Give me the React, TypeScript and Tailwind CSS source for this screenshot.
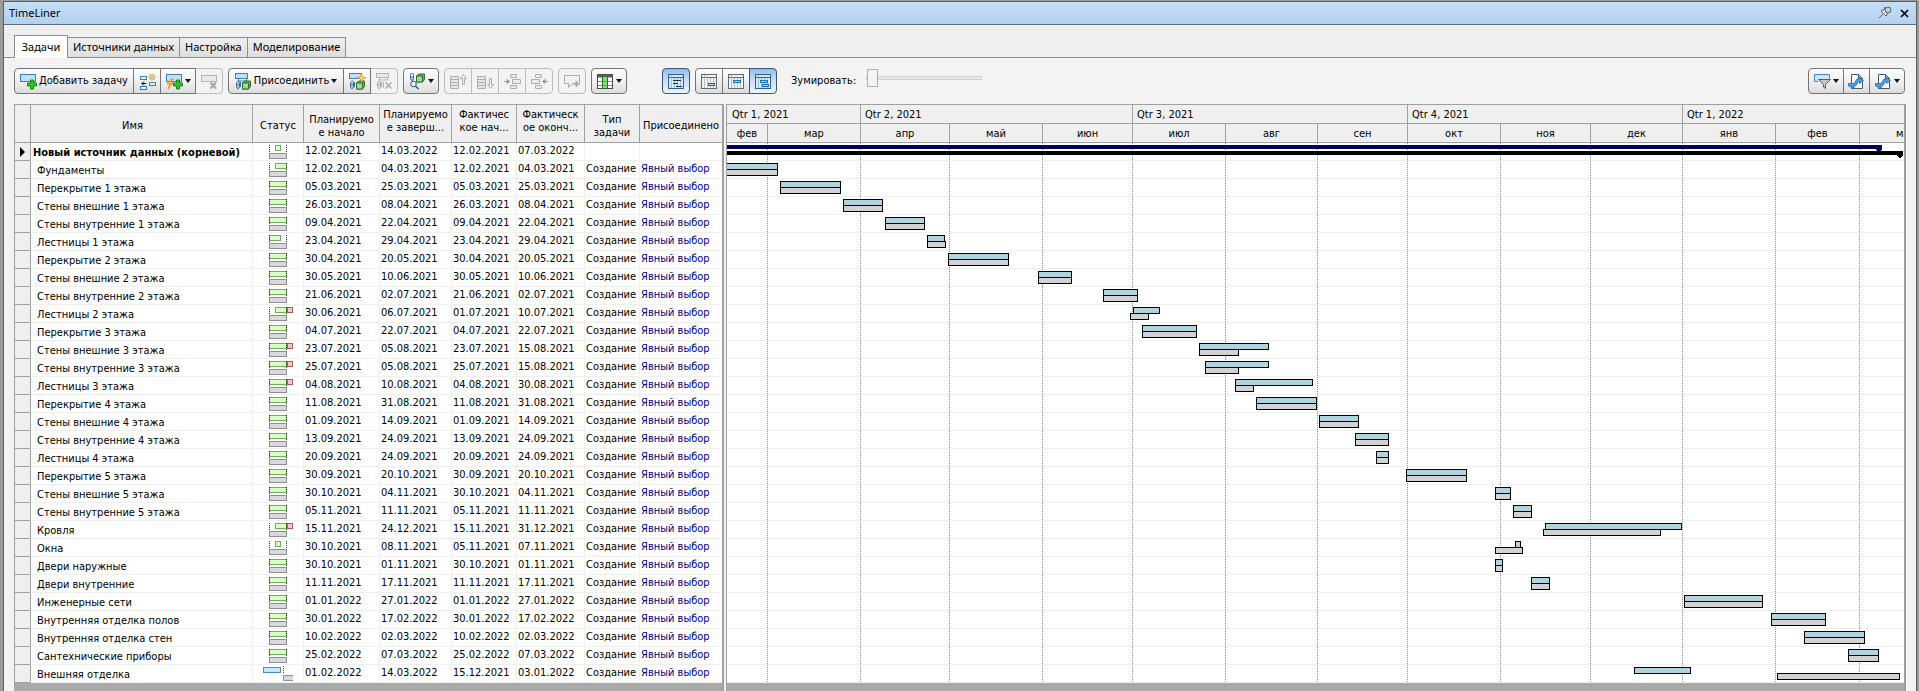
import type { ReactNode } from "react";

type Status = "full" | "late" | "small" | "early" | "lateOver" | "fullOver" | "ahead";

interface Task {
  name: string;
  status: Status;
  planStart: string;
  planEnd: string;
  factStart: string;
  factEnd: string;
  factStartHour?: number;
  factEndHour?: number;
}

const task = (
  name: string,
  status: Status,
  planStart: string,
  planEnd: string,
  factStart: string = planStart,
  factEnd: string = planEnd,
  factStartHour?: number,
  factEndHour?: number,
): Task => ({ name, status, planStart, planEnd, factStart, factEnd, factStartHour, factEndHour });

const TASKS: Task[] = [
  task("Новый источник данных (корневой)", "small", "12.02.2021", "14.03.2022", "12.02.2021", "07.03.2022"),
  task("Фундаменты", "late", "12.02.2021", "04.03.2021"),
  task("Перекрытие 1 этажа", "full", "05.03.2021", "25.03.2021"),
  task("Стены внешние 1 этажа", "full", "26.03.2021", "08.04.2021"),
  task("Стены внутренние 1 этажа", "full", "09.04.2021", "22.04.2021"),
  task("Лестницы 1 этажа", "early", "23.04.2021", "29.04.2021", "23.04.2021", "29.04.2021", 8, 9),
  task("Перекрытие 2 этажа", "full", "30.04.2021", "20.05.2021"),
  task("Стены внешние 2 этажа", "full", "30.05.2021", "10.06.2021"),
  task("Стены внутренние 2 этажа", "full", "21.06.2021", "02.07.2021"),
  task("Лестницы 2 этажа", "lateOver", "30.06.2021", "06.07.2021", "01.07.2021", "10.07.2021", 8, 8),
  task("Перекрытие 3 этажа", "full", "04.07.2021", "22.07.2021"),
  task("Стены внешние 3 этажа", "fullOver", "23.07.2021", "05.08.2021", "23.07.2021", "15.08.2021"),
  task("Стены внутренние 3 этажа", "fullOver", "25.07.2021", "05.08.2021", "25.07.2021", "15.08.2021"),
  task("Лестницы 3 этажа", "fullOver", "04.08.2021", "10.08.2021", "04.08.2021", "30.08.2021", 8, 9),
  task("Перекрытие 4 этажа", "full", "11.08.2021", "31.08.2021"),
  task("Стены внешние 4 этажа", "full", "01.09.2021", "14.09.2021"),
  task("Стены внутренние 4 этажа", "full", "13.09.2021", "24.09.2021"),
  task("Лестницы 4 этажа", "full", "20.09.2021", "24.09.2021"),
  task("Перекрытие 5 этажа", "full", "30.09.2021", "20.10.2021"),
  task("Стены внешние 5 этажа", "full", "30.10.2021", "04.11.2021"),
  task("Стены внутренние 5 этажа", "full", "05.11.2021", "11.11.2021"),
  task("Кровля", "lateOver", "15.11.2021", "24.12.2021", "15.11.2021", "31.12.2021", 23, 17),
  task("Окна", "small", "30.10.2021", "08.11.2021", "05.11.2021", "07.11.2021", 23, 22),
  task("Двери наружные", "full", "30.10.2021", "01.11.2021"),
  task("Двери внутренние", "full", "11.11.2021", "17.11.2021"),
  task("Инженерные сети", "full", "01.01.2022", "27.01.2022"),
  task("Внутренняя отделка полов", "full", "30.01.2022", "17.02.2022"),
  task("Внутренняя отделка стен", "full", "10.02.2022", "02.03.2022"),
  task("Сантехнические приборы", "full", "25.02.2022", "07.03.2022"),
  task("Внешняя отделка", "ahead", "01.02.2022", "14.03.2022", "15.12.2021", "03.01.2022", 19, 17),
];

/* Time scale: the visible range starts 40px before 1 March 2021. */
const ROW = 18;
const PX_PER_DAY = 1092 / 365;
const ORIGIN = Date.UTC(2021, 2, 1);
const ORIGIN_X = 40;

function xOf(date: string, hour: number): number {
  const [d, m, y] = date.split(".").map(Number);
  const days = (Date.UTC(y, m - 1, d, hour) - ORIGIN) / 86400000;
  return Math.floor(ORIGIN_X + days * PX_PER_DAY + 0.9);
}

const monthX = (i: number) =>
  Math.round(ORIGIN_X + ((Date.UTC(2021, 2 + i, 1) - ORIGIN) / 86400000) * PX_PER_DAY);

const MONTHS = ["мар", "апр", "май", "июн", "июл", "авг", "сен", "окт", "ноя", "дек", "янв", "фев", "мар"].map(
  (label, i) => ({ label, x: monthX(i), width: monthX(i + 1) - monthX(i) }),
);

const QUARTERS = [
  { label: "Qtr 1, 2021", from: 0, to: monthX(1) },
  { label: "Qtr 2, 2021", from: monthX(1), to: monthX(4) },
  { label: "Qtr 3, 2021", from: monthX(4), to: monthX(7) },
  { label: "Qtr 4, 2021", from: monthX(7), to: monthX(10) },
  { label: "Qtr 1, 2022", from: monthX(10), to: monthX(13) },
];

/* ---------- icons ---------- */

function Icon({ children, w = 17 }: { children: ReactNode; w?: number }) {
  return (
    <svg width={w} height="17" viewBox={`0 0 ${w} 17`} fill="none" className="shrink-0" aria-hidden="true">
      {children}
    </svg>
  );
}

const Plus = ({ x, y }: { x: number; y: number }) => (
  <path
    d={`M${x + 3} ${y}h3v3h3v3h-3v3h-3v-3h-3v-3h3z`}
    fill="#35c22b"
    stroke="#148a12"
    strokeWidth="1"
  />
);

const Star = ({ x, y }: { x: number; y: number }) => (
  <g stroke="#e8862a" strokeWidth="1">
    <path d={`M${x} ${y - 3.5}v7M${x - 3.5} ${y}h7M${x - 2.5} ${y - 2.5}l5 5M${x + 2.5} ${y - 2.5}l-5 5`} />
    <circle cx={x} cy={y} r="1" fill="#fff27a" stroke="none" />
  </g>
);

const Clip = ({ c }: { c: string }) => (
  <path d="M1.5 9.5v4a1.5 2 0 0 0 3 0v-4a1 1.2 0 0 0-2.5 0M3 10v3.5M5.5 9v5" stroke={c} />
);

const Cube = ({ x, y }: { x: number; y: number }) => (
  <g strokeWidth="1" strokeLinejoin="round">
    <path d={`M${x} ${y + 2.5}l2-2h6v5.500l-2 2.500h-6z`} fill="#6fae63" stroke="#2c6e2c" />
    <path d={`M${x} ${y + 2.5}h6v6h-6z`} fill="#a5d79b" stroke="#2c6e2c" />
  </g>
);

const AddTaskIcon = () => (
  <Icon>
    <rect x="0.5" y="1.5" width="15" height="7" fill="#bfe0fb" stroke="#3f7fb5" />
    <Plus x={7.5} y={7} />
  </Icon>
);
const InsertIcon = () => (
  <Icon>
    <rect x="1.5" y="3.5" width="6" height="3" fill="#e3f1fc" stroke="#3f7fb5" />
    <rect x="10.5" y="9.5" width="6" height="3" fill="#e3f1fc" stroke="#3f7fb5" />
    <rect x="1.5" y="13.5" width="6" height="3" fill="#e3f1fc" stroke="#3f7fb5" />
    <path d="M2.500 10.500h5M5 8.500l-2 2 2 2" stroke="#111" />
    <Star x={13} y={4} />
  </Icon>
);
const AutoAddIcon = () => (
  <Icon>
    <rect x="0.5" y="1.5" width="15" height="7" fill="#bfe0fb" stroke="#3f7fb5" />
    <path d="M5 6l-4 5h3l-2 5 5-6h-3l3-4z" fill="#ffd23c" stroke="#e07818" strokeWidth=".8" />
    <Plus x={7.5} y={7} />
  </Icon>
);
const DeleteIcon = () => (
  <Icon>
    <rect x="0.5" y="2.5" width="15" height="6" fill="#e9e9e9" stroke="#b4b4b4" />
    <path d="M9.500 9.500l5.500 6M15 9.500l-5.500 6" stroke="#a6a6a6" strokeWidth="2" />
  </Icon>
);
const AttachIcon = () => (
  <Icon>
    <rect x="0.5" y="0.5" width="12" height="5" fill="#bfe0fb" stroke="#3f7fb5" />
    <path d="M3.5 6v2h8v-2" stroke="#3f7fb5" />
    <Clip c="#2f6ea5" />
    <Cube x={7.5} y={7.5} />
  </Icon>
);
const AutoAttachIcon = () => (
  <Icon>
    <rect x="0.5" y="0.5" width="12" height="5" fill="#bfe0fb" stroke="#3f7fb5" />
    <Clip c="#2f6ea5" />
    <Cube x={7.5} y={7.5} />
    <path d="M12.5 1l1.200 2.800 3 1-3 1-1.200 3-1.200-3-3-1 3-1z" fill="#ffe15a" stroke="#e8862a" strokeWidth=".8" />
  </Icon>
);
const ClearAttachIcon = () => (
  <Icon>
    <rect x="0.5" y="0.5" width="12" height="4" fill="#e9e9e9" stroke="#b4b4b4" />
    <path d="M3.5 5v2h8v-2M7.5 9v6" stroke="#b4b4b4" />
    <Clip c="#a9a9a9" />
    <path d="M9.5 9.500l6 6M15.500 9.500l-6 6" stroke="#a9a9a9" strokeWidth="1.500" />
  </Icon>
);
const FindIcon = () => (
  <Icon>
    <path d="M1.5 1.500v4a1.500 2 0 0 0 3 0v-4a1.500 1.500 0 0 0-3 0M3 3v3" stroke="#3b6bb0" />
    <Cube x={7.5} y={0.5} />
    <circle cx="4.5" cy="11" r="2.800" fill="#dff0fb" stroke="#2f5b78" />
    <path d="M6.5 13l3 3" stroke="#2f5b78" strokeWidth="1.500" />
  </Icon>
);
const ListMoveIcon = ({ down }: { down?: boolean }) => (
  <Icon>
    <path d="M.5 3.500h8v12h-8zM.5 6.500h8M.5 9.500h8M.5 12.500h8" fill="#e6e6e6" stroke="#adadad" />
    <path
      d={down ? "M12.500 5.500h2v6h2l-3 4-3-4h2z" : "M12.500 11.500h2v-6h2l-3-4-3 4h2z"}
      fill="#ededed"
      stroke="#adadad"
    />
  </Icon>
);
const IndentIcon = ({ out }: { out?: boolean }) => (
  <Icon>
    <g fill="#ececec" stroke="#adadad" transform={out ? "translate(17 0) scale(-1 1)" : undefined}>
      <path d="M6.500 1.500h6v3h-6zM6.500 12.500h6v3h-6zM8.500 6.500h8v4h-8z" />
      <path d="M0 8.500h3M3 6.500l2.500 2-2.500 2z" fill="#999" stroke="#999" />
    </g>
  </Icon>
);
const CommentIcon = () => (
  <Icon>
    <path d="M.5 2.500h15v8h-7l-4 4v-4h-4z" fill="#f1f1f1" stroke="#adadad" />
    <path d="M12.500 8v6M9.500 11h6" stroke="#adadad" strokeWidth="2" />
  </Icon>
);
const ColumnsIcon = () => (
  <Icon>
    <rect x=".5" y="1.500" width="15" height="14" fill="#fff" stroke="#4a4a4a" />
    <path d="M1 3h14" stroke="#5a5a5a" strokeWidth="3" />
    <path d="M6 4h4v11h-4z" fill="#7fe070" />
    <path d="M5.500 4v11M10.500 4v11" stroke="#1d7a1d" />
    <path d="M1 8.500h4M6 8.500h4M11 8.500h4M1 12.500h4M6 12.500h4M11 12.500h4" stroke="#8a8a8a" />
  </Icon>
);

function GanttIcon({ children, on }: { children: ReactNode; on?: boolean }) {
  return (
    <Icon w={16}>
      <rect x=".5" y="1.500" width="15" height="14" fill={on ? "#d6e9fb" : "#f3f3f3"} stroke={on ? "#2f5f8c" : "#5d6b75"} />
      <path d="M0 4.500h16" stroke={on ? "#2f5f8c" : "#5d6b75"} />
      <path d="M3.500 2v13M6.500 5v10M9.500 5v10M12.500 5v10" stroke="#9db1c0" strokeWidth=".8" />
      {children}
    </Icon>
  );
}
const GanttTextIcon = () => (
  <GanttIcon on>
    <path d="M5 7.500h8M5 10.500h5M8 13.500h6" stroke="#24323d" />
  </GanttIcon>
);
const GanttPlanIcon = () => (
  <GanttIcon>
    <rect x="7.500" y="10.500" width="6" height="2" fill="#ddd" stroke="#555" />
  </GanttIcon>
);
const GanttFactIcon = () => (
  <GanttIcon>
    <rect x="5.500" y="7.500" width="7" height="2" fill="#9fd2ff" stroke="#1f6fb5" />
  </GanttIcon>
);
const GanttBothIcon = () => (
  <GanttIcon on>
    <rect x="5.500" y="7.500" width="7" height="2" fill="#9fd2ff" stroke="#1f6fb5" />
    <rect x="7.500" y="11.500" width="6" height="2" fill="#9fd2ff" stroke="#1f6fb5" />
  </GanttIcon>
);
const FilterIcon = () => (
  <Icon>
    <path d="M4 8.500h-3.500v-7h15v4" fill="#cfe6fa" stroke="#3f86c8" />
    <path d="M4.500 6.500h12l-5 5v4l-2-1.500v-2.500z" fill="#c3c7cb" stroke="#555c62" />
  </Icon>
);
const ExportIcon = () => (
  <Icon>
    <path d="M3.500 1.500h7l4 4v10h-11z" fill="#f7f9fb" stroke="#4c5a66" />
    <path d="M10.500 1.500v4h4" stroke="#4c5a66" />
    <path
      d="M.500 10.500h5.500l3-4.500h2.500v-2l4 3.500-4 3v-2h-1l-3 4.500h-2.500l1.500 2-6-2z"
      fill="#4aa3e6"
      stroke="#1d6cae"
      strokeWidth=".8"
    />
  </Icon>
);
const Caret = () => (
  <svg width="6" height="4" viewBox="0 0 6 4" className="shrink-0" aria-hidden="true">
    <path d="M0 0h6L3 4z" fill="#111" />
  </svg>
);

/* ---------- toolbar ---------- */

type Look = "normal" | "disabled" | "pressed";

function ToolButton({
  label,
  width,
  look = "normal",
  children,
}: {
  label: string;
  width: string;
  look?: Look;
  children: ReactNode;
}) {
  const looks: Record<Look, string> = {
    normal: "border-[#747474] bg-linear-to-b from-[#fdfdfd] via-[#f0f0f0] to-[#dcdcdc] z-10",
    disabled: "border-[#bcbcbc] bg-[#f3f3f3]",
    pressed: "border-[#3b5678] bg-linear-to-b from-[#94bdea] via-[#c9e0f8] to-[#eaf5ff] z-10",
  };
  return (
    <button
      type="button"
      aria-label={label}
      disabled={look === "disabled"}
      className={`relative -ml-px flex h-[26px] items-center justify-center gap-0.5 border first:ml-0 first:rounded-l-[4px] last:rounded-r-[4px] ${width} ${looks[look]}`}
    >
      {children}
    </button>
  );
}

const Group = ({ children }: { children: ReactNode }) => <div className="flex shrink-0">{children}</div>;

function Toolbar() {
  return (
    <div className="flex items-center gap-[5px] py-[10px] pr-[11px] pl-[10px]">
      <Group>
        <ToolButton label="Добавить задачу" width="w-[120px]">
          <AddTaskIcon />
          <span>Добавить задачу</span>
        </ToolButton>
        <ToolButton label="Вставить задачу" width="w-[28px]"><InsertIcon /></ToolButton>
        <ToolButton label="Автоматически добавить задачи" width="w-[36px]"><AutoAddIcon /><Caret /></ToolButton>
        <ToolButton label="Удалить задачу" width="w-[28px]" look="disabled"><DeleteIcon /></ToolButton>
      </Group>
      <Group>
        <ToolButton label="Присоединить" width="w-[116px]">
          <AttachIcon />
          <span>Присоединить</span>
          <Caret />
        </ToolButton>
        <ToolButton label="Присоединить по правилам" width="w-[28px]"><AutoAttachIcon /></ToolButton>
        <ToolButton label="Очистить присоединение" width="w-[28px]" look="disabled"><ClearAttachIcon /></ToolButton>
      </Group>
      <Group>
        <ToolButton label="Найти элементы" width="w-[36px]"><FindIcon /><Caret /></ToolButton>
      </Group>
      <Group>
        <ToolButton label="Переместить вверх" width="w-[28px]" look="disabled"><ListMoveIcon /></ToolButton>
        <ToolButton label="Переместить вниз" width="w-[28px]" look="disabled"><ListMoveIcon down /></ToolButton>
        <ToolButton label="Увеличить отступ" width="w-[28px]" look="disabled"><IndentIcon /></ToolButton>
        <ToolButton label="Уменьшить отступ" width="w-[28px]" look="disabled"><IndentIcon out /></ToolButton>
      </Group>
      <Group>
        <ToolButton label="Добавить комментарий" width="w-[28px]" look="disabled"><CommentIcon /></ToolButton>
      </Group>
      <Group>
        <ToolButton label="Столбцы" width="w-[36px]"><ColumnsIcon /><Caret /></ToolButton>
      </Group>
      <div className="ml-[30px] flex gap-[5px]">
        <Group>
          <ToolButton label="Показать диаграмму Ганта" width="w-[28px]" look="pressed"><GanttTextIcon /></ToolButton>
        </Group>
        <Group>
          <ToolButton label="Планируемые даты" width="w-[28px]"><GanttPlanIcon /></ToolButton>
          <ToolButton label="Фактические даты" width="w-[28px]"><GanttFactIcon /></ToolButton>
          <ToolButton label="Планируемые и фактические" width="w-[28px]" look="pressed"><GanttBothIcon /></ToolButton>
        </Group>
      </div>
      <label htmlFor="zoom" className="ml-[9px] shrink-0">Зумировать:</label>
      <input
        id="zoom"
        type="range"
        min="0"
        max="100"
        defaultValue="0"
        className="-mt-[6px] ml-[5px] h-[18px] w-[116px] appearance-none bg-transparent [&::-webkit-slider-runnable-track]:h-[4px] [&::-webkit-slider-runnable-track]:border [&::-webkit-slider-runnable-track]:border-[#d0d0d0] [&::-webkit-slider-runnable-track]:bg-[#e8e8e8] [&::-webkit-slider-thumb]:-mt-[8px] [&::-webkit-slider-thumb]:h-[18px] [&::-webkit-slider-thumb]:w-[11px] [&::-webkit-slider-thumb]:appearance-none [&::-webkit-slider-thumb]:border [&::-webkit-slider-thumb]:border-[#b0b0b0] [&::-webkit-slider-thumb]:bg-[#f4f4f4]"
      />
      <div className="ml-auto">
        <Group>
          <ToolButton label="Фильтр по состоянию" width="w-[36px]"><FilterIcon /><Caret /></ToolButton>
          <ToolButton label="Экспорт в наборы" width="w-[27px]"><ExportIcon /></ToolButton>
          <ToolButton label="Экспорт расписания" width="w-[36px]"><ExportIcon /><Caret /></ToolButton>
        </Group>
      </div>
    </div>
  );
}

/* ---------- task table ---------- */

function StatusIcon({ status }: { status: Status }) {
  if (status === "ahead") {
    return (
      <svg width="31" height="17" viewBox="0 0 31 17" fill="none" className="mx-auto block" aria-label="Раньше срока">
        <rect x=".5" y="2.5" width="17" height="5" fill="#c2eafc" stroke="#4f8db5" />
        <path d="M20.5 1v8" stroke="#444" strokeDasharray="1 1" />
        <path d="M30 10.5h-9.5v5h9.5" fill="#d9d9db" stroke="#8d8d93" />
      </svg>
    );
  }
  const from = status === "late" || status === "lateOver" || status === "small" ? 12 : 6;
  const to = status === "small" || status === "early" ? 18 : 24;
  const over = status === "lateOver" || status === "fullOver";
  return (
    <svg width="31" height="17" viewBox="0 0 31 17" fill="none" className="mx-auto block" aria-label="Состояние задачи">
      <rect x={from + 0.5} y="2.5" width={to - from - 1} height="5" fill="#d8ffc4" stroke="#70ad5c" />
      {over && <rect x="24.5" y="2.5" width="5" height="5" fill="#ffc4c4" stroke="#a85a5a" />}
      <path d="M6.5 2v7M23.5 2v7" stroke="#333" strokeDasharray="1 1" />
      <rect x="6.5" y="10.5" width="17" height="5" fill="#d9d9db" stroke="#8d8d93" />
    </svg>
  );
}

const HEADERS: { lines: string[]; width: string; pad: string }[] = [
  { lines: ["Имя"], width: "w-[222px]", pad: "pt-1 pr-[18px] align-middle" },
  { lines: ["Статус"], width: "w-[51px]", pad: "pt-1 align-middle" },
  { lines: ["Планируемо", "е начало"], width: "w-[76px]", pad: "pt-1 align-middle" },
  { lines: ["Планируемо", "е заверш..."], width: "w-[72px]", pad: "pt-[3px] align-top" },
  { lines: ["Фактичес", "кое нач..."], width: "w-[65px]", pad: "pt-[3px] align-top" },
  { lines: ["Фактическ", "ое оконч..."], width: "w-[68px]", pad: "pt-[3px] align-top" },
  { lines: ["Тип", "задачи"], width: "w-[55px]", pad: "pt-1 align-middle" },
  { lines: ["Присоединено"], width: "w-[83px]", pad: "pt-1 align-middle" },
];

const CELL = "h-[18px] border-b border-l border-[#f0f0f0] p-0";

function TaskTable() {
  return (
    <table className="w-full table-fixed border-separate border-spacing-0 bg-white leading-[13px]">
      <thead>
        <tr>
          <th scope="col" aria-label="Строка" className="h-[39px] w-[16px] border-t border-b border-l border-[#a0a0a0] bg-[#efefef] p-0" />
          {HEADERS.map((h) => (
            <th
              key={h.lines.join()}
              scope="col"
              className={`h-[39px] border-t border-b border-l border-[#a0a0a0] bg-[#efefef] p-0 font-normal whitespace-nowrap ${h.width} ${h.pad}`}
            >
              {h.lines.map((l) => (
                <span key={l} className="block">{l}</span>
              ))}
            </th>
          ))}
        </tr>
      </thead>
      <tbody>
        {TASKS.map((t, i) => (
          <tr key={t.name} className="whitespace-nowrap">
            <td className="h-[18px] border-b border-l border-[#a0a0a0] bg-[#efefef] p-0">
              {i === 0 && (
                <svg width="5" height="10" viewBox="0 0 5 10" className="mx-auto block" aria-hidden="true">
                  <path d="M0 0l5 5-5 5z" fill="#000" />
                </svg>
              )}
            </td>
            <td className={`h-[18px] border-b border-l border-b-[#f0f0f0] border-l-[#a0a0a0] p-0 pt-[2px] align-middle ${i === 0 ? "pl-[2px] font-bold" : "pl-[6px]"}`}>
              {t.name}
            </td>
            <td className={CELL}><StatusIcon status={t.status} /></td>
            {[t.planStart, t.planEnd, t.factStart, t.factEnd].map((d, k) => (
              <td key={k} className={`${CELL} pb-[2px] pl-px`}>{d}</td>
            ))}
            <td className={`${CELL} pb-[2px] pl-px`}>{i > 0 && "Создание"}</td>
            <td className={`${CELL} pb-[2px] pl-px text-[#00007c]`}>{i > 0 && "Явный выбор"}</td>
          </tr>
        ))}
      </tbody>
    </table>
  );
}

/* ---------- Gantt chart ---------- */

function Bar({ x1, x2, y, fill }: { x1: number; x2: number; y: number; fill: string }) {
  return <rect x={x1 + 0.5} y={y + 0.5} width={x2 - x1 - 1} height="6" fill={fill} stroke="#000" />;
}

function Gantt() {
  const height = TASKS.length * ROW;
  const root = TASKS[0];
  const factX = xOf(root.factEnd, 17);
  const planX = xOf(root.planEnd, 17);
  return (
    <div className="overflow-hidden bg-white">
      <div className="h-[39px] border-t border-b border-[#a0a0a0] bg-[#efefef]">
        <div className="flex h-[19px] border-b border-[#a0a0a0]">
          {QUARTERS.map((q) => (
            <div
              key={q.label}
              className="shrink-0 border-l border-[#a0a0a0] pl-1 leading-[20px] first:border-transparent"
              style={{ width: q.to - q.from }}
            >
              {q.label}
            </div>
          ))}
        </div>
        <div className="flex h-[18px] text-center leading-[20px]">
          <div className="shrink-0" style={{ width: ORIGIN_X }}>фев</div>
          {MONTHS.map((m) => (
            <div key={m.x} className="shrink-0 border-l border-[#a0a0a0]" style={{ width: m.width }}>
              {m.label}
            </div>
          ))}
        </div>
      </div>
      <svg width="100%" height={height} className="block" role="img" aria-label="Диаграмма Ганта" shapeRendering="crispEdges">
        {TASKS.map((t, i) => (
          <line key={t.name} x1="0" x2="100%" y1={(i + 1) * ROW - 0.5} y2={(i + 1) * ROW - 0.5} stroke="#f0f0f0" />
        ))}
        {MONTHS.map((m) => (
          <line key={m.x} x1={m.x + 0.5} x2={m.x + 0.5} y1="0" y2={height} stroke="#8a8a8a" strokeDasharray="1 1" />
        ))}
        <rect x="0" y="2" width={factX + 3} height="4" fill="#00005c" />
        <path d={`M${factX - 4} 5h7v1l-3 3h-1l-3-3z`} fill="#00005c" />
        <rect x="0" y="8" width={planX + 3} height="4" fill="#000" />
        <path d={`M${planX - 4} 11h7v1l-3 3h-1l-3-3z`} fill="#000" />
        {TASKS.slice(1).map((t, i) => {
          const y = (i + 1) * ROW;
          return (
            <g key={t.name}>
              <Bar x1={xOf(t.factStart, t.factStartHour ?? 8)} x2={xOf(t.factEnd, t.factEndHour ?? 17)} y={y + 2} fill="#b0d4de" />
              <Bar x1={xOf(t.planStart, 8)} x2={xOf(t.planEnd, 17)} y={y + 8} fill="#d2d2d2" />
            </g>
          );
        })}
      </svg>
    </div>
  );
}

/* ---------- window ---------- */

const TABS = ["Задачи", "Источники данных", "Настройка", "Моделирование"];

export default function App() {
  return (
    <div className="flex min-h-screen flex-col bg-[#9b9b9b] pt-px pr-[2px] pl-[3px] font-['DejaVu_Sans_Condensed','DejaVu_Sans',sans-serif] text-[11px] text-black">
      <div className="flex flex-1 flex-col border-t border-r border-l border-[#5c5c5c] bg-[#efefef]">
        <header className="flex h-[23px] items-center border-b border-[#5f6a75] bg-linear-to-b from-[#c6def6] to-[#b1d2f2] pr-[7px] pl-[5px]">
          <h1 className="font-['Noto_Sans',sans-serif]">TimeLiner</h1>
          <button type="button" aria-label="Закрепить" className="ml-auto">
            <svg width="14" height="14" viewBox="0 0 14 14" fill="none" aria-hidden="true">
              <path d="M1 12l4-4" stroke="#5d666e" />
              <path d="M3 5l5 5 1-1v-2l2-1-4-5-1 3h-2z" fill="#eef0f1" stroke="#5d666e" />
              <circle cx="10" cy="4" r="3" fill="#c4cace" stroke="#5d666e" />
            </svg>
          </button>
          <button type="button" aria-label="Закрыть" className="ml-2">
            <svg width="9" height="9" viewBox="0 0 9 9" aria-hidden="true">
              <path d="M1 1l7 7M8 1L1 8" stroke="#000" strokeWidth="1.700" />
            </svg>
          </button>
        </header>

        <nav role="tablist" className="flex h-[33px] items-end border-b border-[#8c8c8c] pl-[10px] font-['Noto_Sans',sans-serif]">
          {TABS.map((t, i) => (
            <button
              key={t}
              type="button"
              role="tab"
              aria-selected={i === 0}
              className={
                i === 0
                  ? "-mb-px h-[23px] w-[54px] border border-b-0 border-[#8c8c8c] bg-white"
                  : "h-[20px] border border-b-0 border-l-0 border-[#8c8c8c] bg-linear-to-b from-[#efefef] to-[#dedede] px-[5px]"
              }
            >
              {t}
            </button>
          ))}
        </nav>

        <main className="flex flex-1 flex-col bg-[#f3f3f3]">
          <Toolbar />
          <div className="flex flex-1 pr-[10px] pl-[10px]">
            <div className="w-[710px] shrink-0 border-r-2 border-[#a0a0a0] bg-[#a9a9a9]">
              <TaskTable />
            </div>
            <div className="ml-[2px] min-w-0 flex-1 border-r-2 border-l border-[#a0a0a0] bg-[#a9a9a9]">
              <Gantt />
            </div>
          </div>
        </main>
      </div>
    </div>
  );
}
